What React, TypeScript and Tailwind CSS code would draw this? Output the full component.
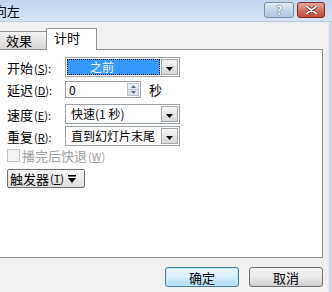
import React from "react";

const font = { fontFamily: '"Noto Sans CJK SC", "Liberation Sans", sans-serif' };

const Arrow = () => (
  <svg width="7" height="4" viewBox="0 0 7 4">
    <path d="M0 0h7L3.5 4z" fill="#000" />
  </svg>
);

const DropBtn = () => (
  <div className="w-[17px] h-[16px] shrink-0 flex items-center justify-center border border-[#a7a7a7] bg-gradient-to-b from-[#f4f4f4] to-[#d9d9d9]">
    <div className="mt-[3px]">
      <Arrow />
    </div>
  </div>
);

const Key = ({ k, colon }: { k: string; colon?: boolean }) => (
  <span className="text-[11px] ml-[1px]">
    (<span className="underline">{k}</span>){colon ? ":" : ""}
  </span>
);

const Label = ({ text, k }: { text: string; k: string }) => (
  <div className="w-[58px] text-[13px] leading-none text-black whitespace-nowrap">
    {text}
    <Key k={k} colon />
  </div>
);

const Combo = ({ value }: { value: string }) => (
  <div className="w-[115px] h-[20px] border border-[#9aa1aa] bg-white flex items-center justify-between pl-[5px] pr-[1px]">
    <span className="text-[12px] leading-none whitespace-nowrap">{value}</span>
    <DropBtn />
  </div>
);

export default function App() {
  return (
    <div className="w-[332px] h-[292px] bg-[#f0f0f0] flex flex-col overflow-hidden text-black" style={font}>
      {/* title bar */}
      <div className="h-[22px] flex items-center bg-gradient-to-b from-[#c3d6ee] to-[#d8e4f3] border-b border-[#b9c9de]">
        <span className="ml-[-6px] text-[13px] leading-none text-black">向左</span>
        <div className="ml-auto mr-[7px] flex gap-[3px] mt-[-1px]">
          <div className="w-[30px] h-[16px] rounded-[3px] border border-[#7d8ea5] bg-gradient-to-b from-[#e3ecf6] via-[#c3d3e7] to-[#b4c8e1] flex items-center justify-center text-[12px] font-bold text-white leading-none [text-shadow:0_0_1px_#3d4f67,0_0_1px_#3d4f67]">
            ?
          </div>
          <div className="w-[28px] h-[16px] rounded-[3px] border border-[#7a2d28] bg-gradient-to-b from-[#e9a99d] via-[#d3705f] to-[#c34a38] flex items-center justify-center">
            <svg width="11" height="8" viewBox="0 0 11 8">
              <path d="M1 0.8L10 7.2M10 0.8L1 7.2" stroke="#4a1a14" strokeWidth="3.2" strokeLinecap="round" />
              <path d="M1 0.8L10 7.2M10 0.8L1 7.2" stroke="#fff" strokeWidth="1.8" strokeLinecap="round" />
            </svg>
          </div>
        </div>
      </div>

      <div className="flex flex-1">
        <div className="flex flex-col w-[323px]">
          {/* tabs */}
          <div className="h-[27px] flex items-end pt-[5px]">
            <div className="w-[48px] h-[18px] border border-b-0 border-[#8f939a] bg-gradient-to-b from-[#f3f3f3] to-[#d6d6d6] flex items-center pl-[6px] text-[13px] leading-none ml-[-1px]">
              效果
            </div>
            <div className="w-[51px] h-[22px] border border-b-0 border-[#8f939a] bg-white ml-[-1px] mb-[-1px] pl-[7px] pt-[2px] text-[13px] leading-none relative z-10">
              计时
            </div>
          </div>
          {/* panel */}
          <div className="h-[209px] border border-[#8e9299] border-l-0 bg-white pl-[7px] pt-[7px] flex flex-col">
            <div className="flex items-center h-[20px]">
              <Label text="开始" k="S" />
              <div className="w-[115px] h-[20px] border border-[#9aa1aa] bg-white flex items-center p-[1px]">
                <div className="flex-1 h-[16px] bg-[#3399ff] border border-dotted border-black flex items-center pl-[22px] text-[12px] leading-none text-white mr-[1px]">
                  之前
                </div>
                <DropBtn />
              </div>
            </div>
            <div className="flex items-center h-[17px] mt-[4px]">
              <Label text="延迟" k="D" />
              <div className="w-[76px] h-[17px] border border-[#9aa1aa] bg-white flex items-center pl-[3px] pr-[1px]">
                <span className="flex-1 text-[12px] leading-none">0</span>
                <div className="w-[12px] h-[13px] flex flex-col border border-[#b8c3d0] bg-gradient-to-b from-[#eef3f9] to-[#d6e0ec]">
                  <div className="flex-1 flex items-center justify-center border-b border-[#b8c3d0]">
                    <svg width="5" height="3" viewBox="0 0 5 3">
                      <path d="M0 3h5L2.5 0z" fill="#5a6e8a" />
                    </svg>
                  </div>
                  <div className="flex-1 flex items-center justify-center">
                    <svg width="5" height="3" viewBox="0 0 5 3">
                      <path d="M0 0h5L2.5 3z" fill="#5a6e8a" />
                    </svg>
                  </div>
                </div>
              </div>
              <span className="ml-[8px] text-[13px] leading-none">秒</span>
            </div>
            <div className="flex items-center h-[20px] mt-[6px]">
              <Label text="速度" k="E" />
              <Combo value="快速(1 秒)" />
            </div>
            <div className="flex items-center h-[20px] mt-[2px]">
              <Label text="重复" k="R" />
              <Combo value="直到幻灯片末尾" />
            </div>
            <div className="flex items-center h-[13px] mt-[3px] text-[#a0a0a0]">
              <div className="w-[13px] h-[13px] border border-[#c4c4c4] bg-[#f4f4f4]" />
              <span className="ml-[2px] text-[13px] leading-none whitespace-nowrap">
                播完后快退
                <Key k="W" />
              </span>
            </div>
            <div className="mt-[7px] w-[78px] h-[19px] border border-[#6f6f6f] rounded-[2px] bg-gradient-to-b from-[#f6f6f6] to-[#dedede] flex items-center pl-[2px] text-[13px] leading-none whitespace-nowrap">
              触发器
              <Key k="T" />
              <svg className="ml-[4px]" width="8" height="8" viewBox="0 0 8 8">
                <path d="M0 0h8v1.5H0z M0 3h8L4 8z" fill="#000" />
              </svg>
            </div>
          </div>
          {/* footer */}
          <div className="flex-1 flex justify-end items-start pt-[9px] gap-[10px]">
            <div className="w-[74px] h-[20px] rounded-[3px] border border-[#3c7fb1] bg-gradient-to-b from-[#eaf6fd] via-[#d9f0fc] to-[#a7d9f5] flex items-center justify-center text-[13px] leading-none shadow-[inset_0_0_0_1px_#c8e9fa]">
              确定
            </div>
            <div className="w-[74px] h-[20px] rounded-[3px] border border-[#707070] bg-gradient-to-b from-[#f2f2f2] via-[#ebebeb] to-[#cfcfcf] flex items-center justify-center text-[13px] leading-none">
              取消
            </div>
          </div>
        </div>
        <div className="flex-1 flex justify-end">
          <div className="w-[3px] bg-[#c6d8ee]" />
        </div>
      </div>
    </div>
  );
}
